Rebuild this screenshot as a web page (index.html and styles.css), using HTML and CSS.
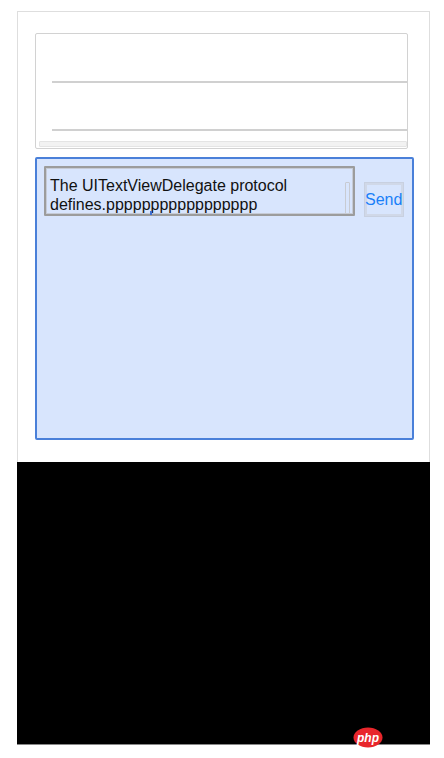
FILE: index.html
```html
<!DOCTYPE html>
<html>
<head>
<meta charset="utf-8">
<link rel="stylesheet" href="styles.css">
</head>
<body>
<div class="frame">
  <div class="table-box">
    <div class="row"></div>
    <div class="row"></div>
    <div class="hscroll"></div>
  </div>
  <div class="compose">
    <div class="compose-row">
      <div class="textview">
        <div class="tv-text">The UITextViewDelegate protocol<br>defines.ppppppppppppppppp</div>
        <div class="vscroll"></div>
        <div class="caret"></div>
      </div>
      <div class="send">Send</div>
    </div>
  </div>
  <div class="keyboard"></div>
</div>
<div class="logo">
  <svg width="30" height="21" viewBox="0 0 30 21"><ellipse cx="15" cy="10.5" rx="14.5" ry="10" fill="#e8262b"/><text x="15" y="14.5" text-anchor="middle" font-family="Liberation Sans, sans-serif" font-size="12" font-style="italic" font-weight="bold" fill="#fff">php</text></svg>
</div>
</body>
</html>
```
FILE: styles.css
```css
html, body {
  margin: 0;
  padding: 0;
  background: #fff;
}
body {
  width: 444px;
  height: 758px;
  position: relative;
  overflow: hidden;
  font-family: "Liberation Sans", Arial, sans-serif;
}
.frame {
  margin: 11px 0 0 17px;
  width: 413px;
  height: 734px;
  box-sizing: border-box;
  border: 1px solid #dedede;
  border-bottom: none;
  padding-top: 21px;
  display: flex;
  flex-direction: column;
}
.table-box {
  margin-left: 17px;
  width: 373px;
  height: 116px;
  box-sizing: border-box;
  border: 1px solid #d2d2d2;
  border-radius: 2px;
  display: flex;
  flex-direction: column;
}
.row {
  height: 48px;
  margin-left: 16px;
  border-bottom: 2px solid #d0d0d0;
  box-sizing: border-box;
  flex: none;
}
.row:first-child {
  height: 49px;
}
.hscroll {
  margin: 10px 0 0 3px;
  height: 4px;
  border: 1px solid #e4e4e4;
  background: #f2f2f2;
  border-radius: 1px;
}
.compose {
  margin: 8px 0 0 17px;
  width: 379px;
  height: 283px;
  box-sizing: border-box;
  border: 2px solid #4a80d9;
  border-radius: 2px;
  background: #d8e5fd;
  padding: 7px 0 0 7px;
}
.compose-row {
  display: flex;
  align-items: flex-start;
}
.textview {
  position: relative;
  width: 311px;
  height: 50px;
  box-sizing: border-box;
  border: 2px solid #9c9c9c;
  border-radius: 1px;
  box-shadow: inset 0 0 0 1px #c6cbd6;
  padding: 8px 0 0 4px;
}
.tv-text {
  font-size: 16px;
  line-height: 19px;
  color: #111;
  white-space: nowrap;
}
.vscroll {
  position: absolute;
  right: 3px;
  top: 14px;
  width: 3px;
  height: 30px;
  border: 1px solid #c8cbd2;
  border-radius: 1px;
}
.caret {
  position: absolute;
  left: 104px;
  top: 43px;
  width: 2px;
  height: 4px;
  background: #3f6fd0;
}
.send {
  margin: 16px 0 0 9px;
  width: 40px;
  height: 35px;
  box-sizing: border-box;
  border: 1px solid #c8d0e0;
  box-shadow: inset 0 0 0 2px #d0d8e8;
  color: #1a7ff8;
  font-size: 16px;
  line-height: 33px;
  text-align: right;
  padding-right: 1px;
  white-space: nowrap;
}
.keyboard {
  margin: 22px 0 0 -1px;
  width: 413px;
  height: 283px;
  background: #000;
  border-bottom: 1px solid #888;
  box-sizing: border-box;
}
.logo {
  position: absolute;
  left: 353px;
  top: 727px;
  width: 30px;
  height: 21px;
}
.logo svg {
  display: block;
}
```
